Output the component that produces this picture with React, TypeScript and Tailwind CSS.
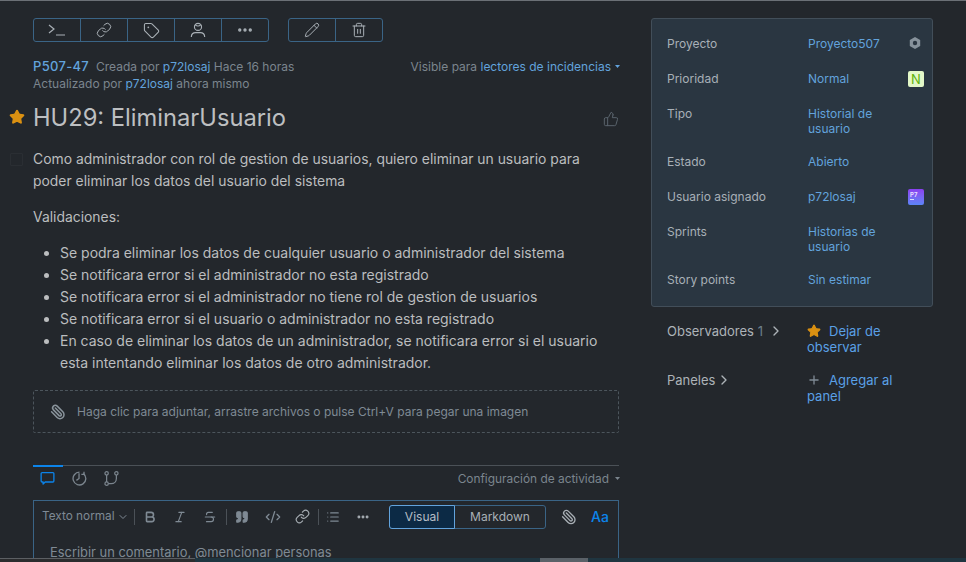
import { Bold, ChevronDown, ChevronRight, CodeXml, Italic, Link, List, MoreHorizontal, Paperclip, Pencil, Plus, Quote, Star, Strikethrough, Tag, ThumbsUp, Trash2 } from "lucide-react";

const details = [
  { label: "Proyecto", value: "Proyecto507", icon: "project", h: "h-[35px]" },
  { label: "Prioridad", value: "Normal", icon: "priority", h: "h-[35px]" },
  { label: "Tipo", value: "Historial de usuario", h: "h-[48px]" },
  { label: "Estado", value: "Abierto", h: "h-[35px]" },
  { label: "Usuario asignado", value: "p72losaj", icon: "avatar", h: "h-[35px]" },
  { label: "Sprints", value: "Historias de usuario", h: "h-[48px]" },
  { label: "Story points", value: "Sin estimar", h: "h-[33px]" },
];

const bullets = [
  "Se podra eliminar los datos de cualquier usuario o administrador del sistema",
  "Se notificara error si el administrador no esta registrado",
  "Se notificara error si el administrador no tiene rol de gestion de usuarios",
  "Se notificara error si el usuario o administrador no esta registrado",
  "En caso de eliminar los datos de un administrador, se notificara error si el usuario esta intentando eliminar los datos de otro administrador.",
];

const Caret = ({ className }: { className: string }) => (
  <svg width="5" height="3" viewBox="0 0 5 3" className={className}>
    <path d="M0 0h5L2.5 3z" fill="currentColor" />
  </svg>
);

const TerminalIcon = ({ className }: { className?: string }) => (
  <svg viewBox="0 0 18 18" fill="none" stroke="currentColor" strokeWidth="1.2" className={className}>
    <path d="M1 4l5 4-5 4M8 14h9" />
  </svg>
);

const PersonIcon = ({ className }: { className?: string }) => (
  <svg viewBox="0 0 18 18" fill="none" stroke="currentColor" strokeWidth="1.3" className={className}>
    <circle cx="9" cy="5.5" r="4" />
    <path d="M6 3.500c1.500 1 4.500 1 6 0" />
    <path d="M1.500 17c0-3.500 2.500-5 5-5h5c2.500 0 5 1.500 5 5" />
  </svg>
);

const CommentIcon = ({ className }: { className?: string }) => (
  <svg viewBox="0 0 16 16" fill="none" stroke="currentColor" strokeWidth="1.4" className={className}>
    <path d="M2.200 1.700h11.600a1 1 0 0 1 1 1v8a1 1 0 0 1-1 1H5.500L3.300 14v-2.300H2.200a1 1 0 0 1-1-1v-8a1 1 0 0 1 1-1z" strokeLinejoin="round" />
  </svg>
);

const HistoryIcon = ({ className }: { className?: string }) => (
  <svg viewBox="0 0 16 16" fill="none" stroke="currentColor" strokeWidth="1.4" className={className}>
    <path d="M12.200 2.800A6.800 6.800 0 1 1 8 1.300" />
    <path d="M12.800 .8v2.800H10" />
    <path d="M7.500 2.500V8l-2.800 2" />
  </svg>
);

const BranchIcon = ({ className }: { className?: string }) => (
  <svg viewBox="0 0 16 16" fill="none" stroke="currentColor" strokeWidth="1.3" className={className}>
    <circle cx="2.800" cy="2.500" r="1.800" />
    <circle cx="13.200" cy="2.500" r="1.800" />
    <circle cx="2.800" cy="13.500" r="1.800" />
    <path d="M2.800 4.300v7.400M13.200 4.300V8c0 3.500-2.500 5.500-5.500 5.500H4.600" />
  </svg>
);

const RowIcon = ({ kind }: { kind?: string }) => {
  if (kind === "project")
    return (
      <svg viewBox="0 0 12 12" className="w-3 h-3 mr-[3px] mt-[1px] text-[#87929b]">
        <path d="M6 0l5.200 3v6L6 12 .8 9V3z" fill="currentColor" fillRule="evenodd" />
        <circle cx="6" cy="6" r="2.200" fill="#2a3641" />
      </svg>
    );
  if (kind === "priority")
    return (
      <div className="w-4 h-4 rounded-[2px] bg-[#e3f8c8] flex items-center justify-center text-[13px] leading-none text-[#5fb30c]">
        N
      </div>
    );
  if (kind === "avatar")
    return (
      <div className="w-4 h-4 rounded-[2px] bg-gradient-to-b from-[#8a3ff0] to-[#5a84f8] pl-[2px] pt-[2px]">
        <div className="text-[6px] leading-[7px] font-bold text-[#e6dcff]">P7</div>
        <div className="mt-[1px] w-1 h-px bg-[#d8e0ff]" />
      </div>
    );
  return null;
};

const App = () => {
  return (
    <div className="w-[966px] h-[562px] overflow-hidden bg-[#23272c] flex flex-col text-[13px] text-[#bbbdbf]" style={{ fontFamily: "Inter, 'Noto Sans', sans-serif" }}>
      <div className="h-px bg-[#6b7076] shrink-0" />
      <div className="flex-1 min-h-0 flex pl-[33px] overflow-hidden">
        {/* main column */}
        <div className="w-[586px] shrink-0 pt-[17px]">
          <div className="flex gap-[19px]">
            <div className="flex h-6 border border-[#3a6486] rounded-[3px] text-[#a9b0b6]">
              <div className="w-[46px] flex items-center justify-center">
                <TerminalIcon className="w-[18px] h-[18px]" />
              </div>
              <div className="w-[47px] border-l border-[#3a6486] flex items-center justify-center">
                <Link className="w-4 h-4" strokeWidth={1.5} />
              </div>
              <div className="w-[47px] border-l border-[#3a6486] flex items-center justify-center">
                <Tag className="w-[17px] h-[17px]" strokeWidth={1.5} />
              </div>
              <div className="w-[47px] border-l border-[#3a6486] flex items-center justify-center">
                <PersonIcon className="w-4 h-4" />
              </div>
              <div className="w-[47px] border-l border-[#3a6486] flex items-center justify-center">
                <MoreHorizontal className="w-[18px] h-[18px]" strokeWidth={2.5} />
              </div>
            </div>
            <div className="flex h-6 border border-[#3a6486] rounded-[3px] text-[#a9b0b6]">
              <div className="w-[46px] flex items-center justify-center">
                <Pencil className="w-4 h-4" strokeWidth={1.5} />
              </div>
              <div className="w-[47px] border-l border-[#3a6486] flex items-center justify-center">
                <Trash2 className="w-4 h-4" strokeWidth={1.5} />
              </div>
            </div>
          </div>

          <div className="mt-[16px] flex justify-between text-xs leading-[17px] text-[#7b858e]">
            <div>
              <div>
                <span className="text-[13px] font-medium text-[#62a3dc] tracking-[0.3px] mr-[7px]">P507-47</span>
                Creada por <span className="text-[#62a3dc]">p72losaj</span> Hace 16 horas
              </div>
              <div>
                Actualizado por <span className="text-[#62a3dc]">p72losaj</span> ahora mismo
              </div>
            </div>
            <div className="flex items-center h-[17px] -mr-px">
              Visible para&nbsp;<span className="text-[#62a3dc]">lectores de incidencias</span>
              <Caret className="ml-[4px] text-[#62a3dc]" />
            </div>
          </div>

          <div className="relative mt-[9px] flex items-center justify-between h-[34px]">
            <Star className="absolute left-[-24px] top-[8px] w-4 h-4 text-[#db9112] fill-[#db9112]" />
            <h1 className="text-[23.7px] font-normal text-[#bdbfc1]">HU29: EliminarUsuario</h1>
            <ThumbsUp className="w-4 h-4 mt-[2px] text-[#59636c]" strokeWidth={1.5} />
          </div>

          <div className="relative mt-[13px] text-[13.9px] leading-[22px]">
            <div className="absolute left-[-23px] top-[5px] w-[13px] h-[13px] border border-[#2a2e33] rounded-[1px]" />
            <p>Como administrador con rol de gestion de usuarios, quiero eliminar un usuario para poder eliminar los datos del usuario del sistema</p>
            <p className="mt-[14px]">Validaciones:</p>
            <ul className="mt-[14px] list-disc pl-[27px] text-sm leading-[22px]">
              {bullets.map((b) => (
                <li key={b}>{b}</li>
              ))}
            </ul>
          </div>

          <div className="mt-[16px] h-[43px] border border-dashed border-[#4c555c] rounded-[2px] flex items-center pl-4 pt-px gap-[11px] text-xs text-[#7f8a94]">
            <Paperclip className="w-4 h-4 -scale-x-100 text-[#8a949c]" strokeWidth={2.25} />
            Haga clic para adjuntar, arrastre archivos o pulse Ctrl+V para pegar una imagen
          </div>

          <div className="mt-[32px] border-t border-[#4b5157] relative flex items-center justify-between h-[26px] mb-[9px]">
            <div className="absolute top-[-1px] left-0 w-[30px] h-[2px] bg-[#0c84ea]" />
            <div className="flex gap-[17px] pl-[7px] text-[#7b858e]">
              <CommentIcon className="w-[15px] h-[15px] text-[#0c84ea]" />
              <HistoryIcon className="w-[15px] h-[15px]" />
              <BranchIcon className="w-[15px] h-[15px]" />
            </div>
            <div className="flex items-center text-[11.9px] text-[#7b858e] -mr-px">
              Configuración de actividad
              <Caret className="ml-[6px]" />
            </div>
          </div>

          <div className="h-[60px] border border-[#3a6486] flex flex-col">
            <div className="flex items-center h-[31px] shrink-0 pl-2 text-[#7f8a94]">
              <span className="text-[11.8px] w-[73px] whitespace-nowrap">Texto normal</span>
              <ChevronDown className="w-3 h-3 ml-[2px]" />
              <div className="w-px h-4 bg-[#4b5157] ml-[5px]" />
              <Bold className="w-[14px] h-[14px] ml-[8px]" strokeWidth={2.75} />
              <Italic className="w-[14px] h-[14px] ml-[16px]" />
              <Strikethrough className="w-[14px] h-[14px] ml-[16px]" />
              <div className="w-px h-4 bg-[#4b5157] ml-[9px]" />
              <Quote className="w-[14px] h-[14px] ml-[8px] fill-[#7f8a94]" />
              <CodeXml className="w-[16px] h-[16px] ml-[16px]" />
              <Link className="w-[15px] h-[15px] ml-[14px] text-[#a9b0b6]" strokeWidth={1.75} />
              <div className="w-px h-4 bg-[#4b5157] ml-[8px]" />
              <List className="w-[14px] h-[14px] ml-[7px]" />
              <MoreHorizontal className="w-[14px] h-[14px] ml-[16px] text-[#a9b0b6]" strokeWidth={3} />
              <div className="ml-[19px] flex h-6 border border-[#3a6486] rounded-[3px] text-xs">
                <div className="w-[66px] -ml-px -my-px h-6 border border-[#62a3dc] rounded-l-[3px] bg-[#0c2a45] flex items-center justify-center text-[#b6bec5]">Visual</div>
                <div className="w-[90px] flex items-center justify-center text-[#a9b0b6]">Markdown</div>
              </div>
              <Paperclip className="w-4 h-4 ml-[15px] -scale-x-100 text-[#a9b0b6]" />
              <span className="ml-[14px] text-sm font-medium text-[#0c84ea]">Aa</span>
            </div>
            <div className="pl-4 pt-[11px] text-[12.9px] text-[#7f8a94]">Escribir un comentario, @mencionar personas</div>
          </div>
        </div>

        {/* sidebar */}
        <div className="ml-[32px] w-[282px] shrink-0 pt-[17px]">
          <div className="h-[289px] bg-[#2a3641] border border-[#424e59] rounded-[3px] pl-[15px] pr-[8px] pt-[17px] text-xs">
            {details.map((d) => (
              <div key={d.label} className={`flex ${d.h}`}>
                <div className="w-[141px] leading-[16px] text-[#a8b0b7]">{d.label}</div>
                <div className="w-[100px] leading-[15px] text-[#62a3dc]">{d.value}</div>
                <div className="flex-1 flex justify-end items-start"><RowIcon kind={d.icon} /></div>
              </div>
            ))}
          </div>
          <div className="mt-[16px] flex text-[13px] leading-4 pl-[16px]">
            <div className="w-[140px] flex items-start text-[#adb3b8]">
              Observadores <span className="ml-1 text-[#6d7f8b]">1</span>
              <ChevronRight className="w-4 h-4 ml-[5px]" />
            </div>
            <div className="w-[110px] text-[#5aa0e6]">
              <Star className="inline w-[14px] h-[14px] mr-2 -mt-[2px] text-[#db9112] fill-[#db9112]" />
              Dejar de observar
            </div>
          </div>
          <div className="mt-[17px] flex text-[13px] leading-4 pl-[16px]">
            <div className="w-[140px] flex items-start text-[#adb3b8]">
              Paneles
              <ChevronRight className="w-4 h-4 ml-[1px]" />
            </div>
            <div className="w-[110px] text-[#5aa0e6]">
              <Plus className="inline w-[14px] h-[14px] mr-2 -mt-[2px] text-[#7f8a94]" strokeWidth={2.25} />
              Agregar al panel
            </div>
          </div>
        </div>
      </div>

      {/* window scrollbar */}
      <div className="h-[4px] bg-[#1f3540] shrink-0 flex">
        <div className="w-[195px] bg-[#2b2c2e] border-t border-[#5c5f63]" />
        <div className="ml-[345px] w-[48px] bg-[#5a6168]" />
      </div>
    </div>
  );
};

export default App;
